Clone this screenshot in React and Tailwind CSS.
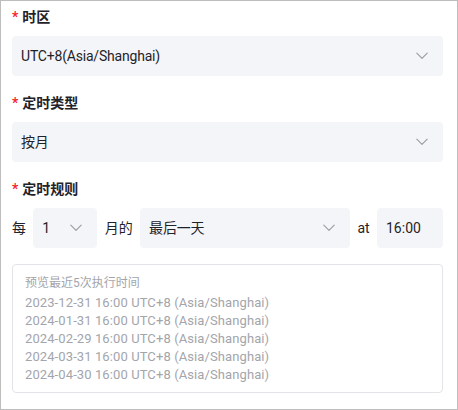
const font = { fontFamily: '"Roboto", "Noto Sans CJK SC", sans-serif' };

function Chevron() {
  return (
    <svg viewBox="0 0 12 8" className="h-[8px] w-[12px] shrink-0" fill="none">
      <path d="M0.8 1.2 L6 6.4 L11.2 1.2" stroke="#9a9ca3" strokeWidth="1.1" strokeLinecap="round" strokeLinejoin="round" />
    </svg>
  );
}

function Label({ children }) {
  return (
    <div className="flex h-[22px] items-center text-[14px] font-semibold text-[#1f2329]">
      <span className="mr-[4px] text-[#f5222d]">*</span>
      {children}
    </div>
  );
}

function Select({ value, className = "" }) {
  return (
    <div className={`flex h-[40px] items-center justify-between rounded-[4px] bg-[#f4f5f8] pl-[9px] pr-[15px] text-[14px] tracking-[-0.2px] text-[#1f2329] ${className}`}>
      <span>{value}</span>
      <Chevron />
    </div>
  );
}

const runs = ["2023-12-31", "2024-01-31", "2024-02-29", "2024-03-31", "2024-04-30"];

export default function App() {
  return (
    <div style={font} className="h-[410px] w-[458px] border border-[#bdbdbd] bg-white pl-[11px] pr-[14px] pt-[5px]">
      <div className="flex flex-col gap-[16px]">
        <div>
          <Label>时区</Label>
          <Select className="mt-[8px]" value="UTC+8(Asia/Shanghai)" />
        </div>
        <div>
          <Label>定时类型</Label>
          <Select className="mt-[8px]" value="按月" />
        </div>
        <div>
          <Label>定时规则</Label>
          <div className="mt-[8px] flex items-center justify-between text-[14px] text-[#1f2329]">
            <span>每</span>
            <Select className="w-[64px]" value="1" />
            <span>月的</span>
            <Select className="w-[210px]" value="最后一天" />
            <span>at</span>
            <div className="flex h-[40px] w-[66px] items-center rounded-[4px] bg-[#f4f5f8] pl-[9px]">16:00</div>
          </div>
        </div>
        <div className="rounded-[4px] border border-[#e3e4e8] px-[12px] pt-[8px] pb-[8px] text-[#a3a5ab]">
          <div className="flex h-[20px] items-center text-[12px]">预览最近5次执行时间</div>
          <div className="mt-[1px] text-[13px] tracking-[0.1px]">
            {runs.map((d) => (
              <div key={d} className="leading-[18px]">
                {d} 16:00 UTC+8 (Asia/Shanghai)
              </div>
            ))}
          </div>
        </div>
      </div>
    </div>
  );
}
